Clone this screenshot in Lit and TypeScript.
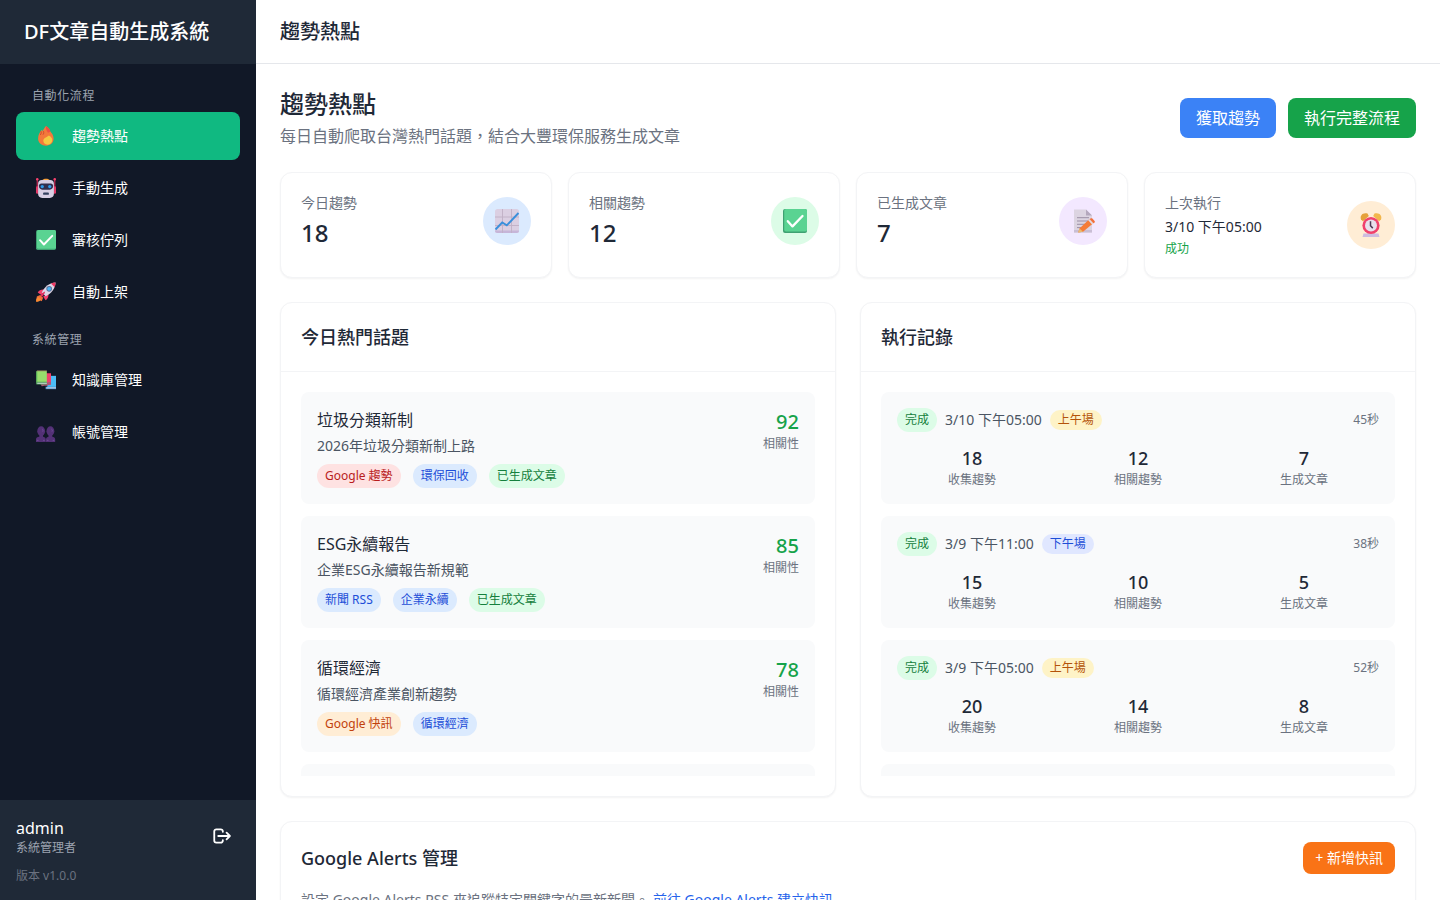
import { LitElement, html, css, svg } from "lit";
import { customElement, property } from "lit/decorators.js";

const glyphs: Record<string, unknown> = {
  fire: svg`
    <path d="M12 1c2.600 1.700 3.900 4 4.300 6.200 1.700 2 3.300 4.600 3.300 7.900 0 4.800-3.200 7.900-7.600 7.900s-7.900-3-7.900-7.700C4.100 11 5.600 7.800 8 5.200l.8 1.700C9.600 4.800 10.500 2.500 12 1z" transform="translate(-2.400 -1.200) scale(1.200 1.080)" fill="#f3793b"/>
    <path d="M12 0c3 1.800 4.700 4.200 5.200 6.600L14.500 8C12.800 5.800 11.500 3.200 12 0z" fill="#ee4f45"/>
    <path d="M5.800 6.200c.9 1.500.5 3-.7 4.600M9 6.200c.7 1.700.2 3-.7 4.300" stroke="#c8452c" fill="none"/>
    <path d="M15.500 11.500c2.800 1.600 4 3.500 4 5.400 0 3.200-2.300 5.600-5.500 5.600-3.300 0-5.200-2-5.200-4.700 0-3 2.900-3.600 6.700-6.300z" fill="#f5c842"/>`,
  robot: svg`
    <path d="M1.500 1v16M22.500 1v16" stroke="#b3264e" stroke-width="1.600"/>
    <circle cx="1.500" cy="1.500" r="1.500" fill="#f4416c"/><circle cx="22.500" cy="1.500" r="1.500" fill="#f4416c"/>
    <rect x="0" y="10" width="3" height="9" rx="1.500" fill="#e33a68"/><rect x="21" y="10" width="3" height="9" rx="1.500" fill="#e33a68"/>
    <path d="M7.500 3C8 .2 16 .2 16.500 3z" fill="#f8a13c"/>
    <path d="M7 2.500h10c3 0 4.500 2 4.500 4.500v12c0 3-1.800 5-5 5h-9c-3.200 0-5-2-5-5V7c0-2.500 1.500-4.500 4.500-4.500z" fill="#d8cfe4"/>
    <path d="M6.500 6.500h11c2 0 3 1.200 3 3.200 0 2.600-1.500 4.300-4 4.300h-9c-2.500 0-4-1.700-4-4.300 0-2 1-3.200 3-3.200z" fill="#312f4e"/>
    <circle cx="7.500" cy="10.300" r="2" fill="#2f9bea"/><circle cx="16.500" cy="10.300" r="2" fill="#2f9bea"/>
    <rect x="8.500" y="17.500" width="7" height="2.600" rx="1" fill="#34415f"/>`,
  check: svg`
    <rect x="0" y="0" width="24" height="24" rx="2" fill="#3fa172"/>
    <rect x="1.200" y="0" width="22.800" height="22.500" rx="1.800" fill="#5ad392"/>
    <path d="M4.800 12.200l4.700 5.200L19.500 7" fill="none" stroke="#fff" stroke-width="2.300" stroke-linecap="round" stroke-linejoin="round"/>`,
  rocket: svg`
    <path d="M1 17.500l4-2 3.500 3.500-1.600 4L4.500 22 1 23.500.3 22z" fill="#f0703a"/>
    <path d="M0 23.800c0-3 1-5 3-5.800l2.800 3C5 23 3 23.800 0 23.800z" fill="#f98a31"/>
    <path d="M2 12.500C3.500 10 6 8.800 9.500 9l-3 6.500zM11.500 22c2.500-1.500 3.700-4 3.500-7.500l-6.500 3z" fill="#f0416c"/>
    <path d="M23.500.6c-7 .4-13.300 4.800-16.500 11.900l4.600 4.600C18.800 13.800 23 7.600 23.500.6z" fill="#ded6e6"/>
    <path d="M23.500.6c-2 .1-3.800.5-5.600 1.100l4.600 4.500c.6-1.800.9-3.700 1-5.600z" fill="#ef3963"/>
    <circle cx="15.800" cy="8.200" r="3.400" fill="#5a6f97"/><circle cx="15.800" cy="8.200" r="2.300" fill="#4cb4f4"/>
    <path d="M5.500 16c1.600-2.500 3.500-4 5.500-4.500-.5 2.500-1.800 4.500-4 6.500z" fill="#e3335f"/>`,
  books: svg`
    <path d="M13.500 7H24v15H13.500z" fill="#4bbcf6"/><path d="M11.500 20H24v3H11.500z" fill="#4a91cf"/><path d="M12.500 20.800H24v1.300H12.500z" fill="#cfd8e8"/>
    <path d="M8.500 4H18v13.500l-6.500 1.500z" fill="#f0416c"/><path d="M5 16.500l13-2.500v3.500L7 19.500z" fill="#a95a78"/>
    <path d="M0 2.500L1.500 1H13v14H0z" fill="#98de6c"/><path d="M0 2.500L1.500 1v13L0 15.500z" fill="#58ab58"/>
    <path d="M0 16c0-1.200.8-2 2-2h11v3.500H1.500C.6 17.500 0 17 0 16z" fill="#4e9b58"/><path d="M1.500 15.300H13v1.200H1.500z" fill="#d5d9e0"/><path d="M1 1h12" stroke="#9a7058" stroke-width=".8"/>`,
  users: svg`
    <g fill="#533176"><ellipse cx="6.200" cy="11" rx="4.700" ry="5.800"/><ellipse cx="17.300" cy="11" rx="4.700" ry="5.800"/>
    <path d="M4 15h4.500v4H4zM15 15h4.500v4H15z"/>
    <path d="M0 24v-3.200C0 18.800 2.200 17.500 6 17.500s5.700 1.300 5.700 3.300V24zM12 24v-3.200c0-2 1.900-3.300 5.500-3.300s5.500 1.300 5.500 3.300V24z"/></g>
    <path d="M7.500 8.500c1 .5 1.200 2 .6 3M18.600 8.500c1 .5 1.200 2 .6 3M1 22h2M8.500 22h2M13 22h2M20 22h2" stroke="#7650a0" fill="none"/>`,
  chart: svg`
    <rect x="0" y="0" width="24" height="24" rx="2.500" fill="#dbcfe2"/>
    <path d="M0 21.500h24c0 1.700-.8 2.500-2.500 2.500h-19C.8 24 0 23.200 0 21.500z" fill="#c6b5d8"/>
    <path d="M7.500 0v24M16.500 0v24M0 8h24M0 16.500h24" stroke="#bfb0c5" stroke-width=".9"/>
    <path d="M.5 20.500l6.700-7 4.600 2.800L23.500 4" fill="none" stroke="#3a8fdb" stroke-width="1.900"/>`,
  memo: svg`
    <path d="M3 .5h12l6 6v17H3z" fill="#dcd4e1"/><path d="M15 .5l6 6h-6z" fill="#b4a8bd"/>
    <path d="M3 21h18v2.500H3z" fill="#c9bed5"/>
    <path d="M6 8.700h12M6 12h12M6 15.300h9M6 18.600h5" stroke="#9c8fa6"/>
    <path d="M8.500 19.500L18.500 10l3.800 4.300-10.300 8.500-4.800.8z" fill="#f57c37"/>
    <path d="M17.200 11.200l3.900 4.200 1.400-1.200-3.900-4.300z" fill="#e2dce6"/>
    <path d="M18.600 9.900c1-.9 2-.9 2.800-.4l2.200 2.400c.6.900.2 1.700-1.100 2.400z" fill="#f2703a"/>
    <path d="M8.500 19.500l3.500 3.300-4.800.8z" fill="#e7bc72"/>`,
  clock: svg`
    <path d="M4.500 20.500h15l1 3.500h-17z" fill="#cdbce0"/>
    <path d="M2 6.500C.5 2.500 4-1 8.500.6L9.800 3 4 8.200z" fill="#e5a13a"/><path d="M22 6.500c1.500-4-2-7.500-6.500-5.900L14.200 3 20 8.200z" fill="#f2b64b"/>
    <circle cx="12" cy="12.500" r="8.600" fill="#f0416c"/><circle cx="12" cy="12.500" r="6" fill="#e8e0ec"/>
    <path d="M11.500 8.200v4.600l2.300 2.300" stroke="#4d3a55" stroke-width="1.500" fill="none"/>`,
  logout: svg`
    <path d="M13 7V6.500A2.500 2.500 0 0 0 10.500 4H5.200a2.500 2.500 0 0 0-2.500 2.500v11A2.500 2.500 0 0 0 5.200 20h5.300a2.500 2.500 0 0 0 2.500-2.500V17M7.500 12h14M17.500 8l4 4-4 4" fill="none" stroke="#fff" stroke-width="2.200" stroke-linecap="round" stroke-linejoin="round"/>`,
};

const base = css`
  *, *::before, *::after { box-sizing: border-box; }
  h1, h2, h3, h4, p, ul { margin: 0; padding: 0; }
  ul { list-style: none; }
  button { font: inherit; border: 0; margin: 0; cursor: pointer; color: #fff; white-space: nowrap; }
  a { text-decoration: none; }
`;

@customElement("app-glyph")
class AppGlyph extends LitElement {
  @property() name = "check";
  static styles = css`
    :host { display: block; flex: none; }
    .art { display: block; width: 100%; height: 100%; overflow: visible; }
  `;
  render() {
    return html`<svg class="art" viewBox="0 0 24 24" aria-hidden="true">${glyphs[this.name]}</svg>`;
  }
}

@customElement("side-bar")
class SideBar extends LitElement {
  static styles = [base, css`
    :host { display: flex; flex-direction: column; flex: none; width: 256px; background: #111827; color: #fff; }
    .brand { display: flex; align-items: center; height: 64px; padding: 0 24px; background: #1f2937; }
    .brand-name { font-size: 20px; line-height: 28px; font-weight: 500; white-space: nowrap; }
    .nav { flex: 1; padding: 16px; display: flex; flex-direction: column; gap: 8px; }
    .label { padding: 8px 16px; font-size: 12px; line-height: 16px; letter-spacing: 0.05em; color: #9ca3af; }
    .items { display: flex; flex-direction: column; gap: 4px; }
    .item { display: flex; align-items: center; gap: 16px; height: 48px; padding: 0 20px; border-radius: 8px; font-size: 14px; line-height: 20px; color: #fff; }
    .active { background: #10b981; }
    .icon { width: 20px; height: 20px; }
    .user { padding: 16px; background: #1f2937; }
    .row { display: flex; align-items: center; justify-content: space-between; }
    .name { font-size: 16px; line-height: 24px; }
    .role { font-size: 12px; line-height: 16px; color: #9ca3af; }
    .version { margin-top: 12px; font-size: 12px; line-height: 16px; color: #6b7280; }
    .logout { padding: 8px; background: transparent; border-radius: 8px; }
    .exit { width: 20px; height: 20px; }
  `];
  groups = [
    { label: "自動化流程", items: [["fire", "趨勢熱點"], ["robot", "手動生成"], ["check", "審核佇列"], ["rocket", "自動上架"]] },
    { label: "系統管理", items: [["books", "知識庫管理"], ["users", "帳號管理"]] },
  ];
  render() {
    return html`
      <div class="brand"><h1 class="brand-name">DF文章自動生成系統</h1></div>
      <nav class="nav">
        ${this.groups.map((g, gi) => html`<div>
          <p class="label">${g.label}</p>
          <ul class="items">${g.items.map(([icon, text], i) => html`
            <li><a href="#" class="item ${gi + i === 0 ? "active" : ""}"><app-glyph class="icon" name=${icon}></app-glyph>${text}</a></li>`)}
          </ul>
        </div>`)}
      </nav>
      <div class="user">
        <div class="row">
          <div><p class="name">admin</p><p class="role">系統管理者</p></div>
          <button class="logout"><app-glyph class="exit" name="logout"></app-glyph></button>
        </div>
        <p class="version">版本 v1.0.0</p>
      </div>`;
  }
}

const topics = [
  { title: "垃圾分類新制", text: "2026年垃圾分類新制上路", score: 92, tags: [["red", "Google 趨勢"], ["blue", "環保回收"], ["green", "已生成文章"]] },
  { title: "ESG永續報告", text: "企業ESG永續報告新規範", score: 85, tags: [["blue", "新聞 RSS"], ["blue", "企業永續"], ["green", "已生成文章"]] },
  { title: "循環經濟", text: "循環經濟產業創新趨勢", score: 78, tags: [["orange", "Google 快訊"], ["blue", "循環經濟"]] },
];

const runs = [
  { date: "3/10 下午05:00", slot: "上午場", tone: "yellow", time: "45秒", counts: [18, 12, 7] },
  { date: "3/9 下午11:00", slot: "下午場", tone: "indigo", time: "38秒", counts: [15, 10, 5] },
  { date: "3/9 下午05:00", slot: "上午場", tone: "yellow", time: "52秒", counts: [20, 14, 8] },
];
const countLabels = ["收集趨勢", "相關趨勢", "生成文章"];

@customElement("trend-page")
class TrendPage extends LitElement {
  static styles = [base, css`
    :host { display: flex; flex-direction: column; gap: 24px; padding: 24px; color: #1f2937; }
    .head, .alert-head { display: flex; align-items: center; justify-content: space-between; }
    .title { font-size: 24px; line-height: 32px; font-weight: 500; }
    .sub { margin-top: 4px; font-size: 16px; line-height: 24px; color: #6b7280; }
    .actions { display: flex; gap: 12px; }
    .btn { padding: 8px 16px; border-radius: 8px; font-size: 16px; line-height: 24px; }
    .btn-blue { background: #3b82f6; }
    .btn-green { background: #16a34a; }
    .btn-orange { padding: 6px 12px; font-size: 14px; line-height: 20px; background: #f97316; }
    .card { background: #fff; border: 1px solid #f3f4f6; border-radius: 12px; box-shadow: 0 1px 2px rgba(0, 0, 0, 0.05); }
    .stats { display: grid; grid-template-columns: repeat(4, 1fr); gap: 16px; }
    .stat { padding: 20px; }
    .stat-row { display: flex; align-items: center; justify-content: space-between; }
    .small { font-size: 14px; line-height: 20px; }
    .muted { color: #6b7280; }
    .value { margin-top: 4px; font-size: 24px; line-height: 32px; font-weight: 500; }
    .when { margin-top: 4px; }
    .ok { margin-top: 4px; font-size: 12px; line-height: 16px; color: #16a34a; }
    .disc { display: grid; place-items: center; width: 48px; height: 48px; border-radius: 50%; }
    .disc-icon { width: 24px; height: 24px; }
    .panels { display: grid; grid-template-columns: 1fr 1fr; gap: 24px; }
    .panel-head { padding: 20px; border-bottom: 1px solid #f3f4f6; }
    .panel-title { font-size: 18px; line-height: 28px; font-weight: 500; }
    .panel-body { padding: 20px; }
    .list { display: flex; flex-direction: column; gap: 12px; max-height: 384px; overflow-y: auto; scrollbar-width: none; }
    .entry { flex: none; min-height: 112px; padding: 16px; background: #f9fafb; border-radius: 8px; }
    .topic { display: flex; justify-content: space-between; }
    .topic-title { font-size: 16px; line-height: 24px; font-weight: 400; }
    .topic-text { margin-top: 4px; color: #4b5563; }
    .tags { display: flex; gap: 12px; margin-top: 8px; }
    .tag { padding: 4px 8px; border-radius: 12px; font-size: 12px; line-height: 16px; }
    .slot { padding: 2px 8px; }
    .score { text-align: right; }
    .score-value { font-size: 20px; line-height: 28px; font-weight: 500; color: #16a34a; }
    .tiny { font-size: 12px; line-height: 16px; color: #6b7280; }
    .run-head { display: flex; align-items: center; gap: 8px; }
    .run-date { color: #4b5563; }
    .run-time { margin-left: auto; }
    .counts { display: grid; grid-template-columns: repeat(3, 1fr); gap: 16px; margin-top: 12px; text-align: center; }
    .count { font-size: 18px; line-height: 28px; font-weight: 500; }
    .alerts { padding: 20px; }
    .hint { margin-top: 16px; }
    .link { color: #2563eb; margin-left: 4px; }
    .red { background: #fee2e2; color: #b91c1c; }
    .blue { background: #dbeafe; color: #1d4ed8; }
    .green { background: #dcfce7; color: #15803d; }
    .orange { background: #ffedd5; color: #c2410c; }
    .yellow { background: #fef3c7; color: #b45309; }
    .indigo { background: #e0e7ff; color: #1d4ed8; }
    .purple { background: #f3e8ff; }
  `];
  stats = [["今日趨勢", 18, "blue", "chart"], ["相關趨勢", 12, "green", "check"], ["已生成文章", 7, "purple", "memo"]];
  disc(tone: unknown, icon: unknown) {
    return html`<div class="disc ${tone}"><app-glyph class="disc-icon" name=${icon}></app-glyph></div>`;
  }
  render() {
    return html`
      <div class="head">
        <div>
          <h2 class="title">趨勢熱點</h2>
          <p class="sub">每日自動爬取台灣熱門話題，結合大豐環保服務生成文章</p>
        </div>
        <div class="actions">
          <button class="btn btn-blue">獲取趨勢</button>
          <button class="btn btn-green">執行完整流程</button>
        </div>
      </div>
      <div class="stats">
        ${this.stats.map(([label, value, tone, icon]) => html`<div class="card stat"><div class="stat-row">
          <div><p class="small muted">${label}</p><p class="value">${value}</p></div>
          ${this.disc(tone, icon)}
        </div></div>`)}
        <div class="card stat"><div class="stat-row">
          <div><p class="small muted">上次執行</p><p class="small when">3/10 下午05:00</p><p class="ok">成功</p></div>
          ${this.disc("orange", "clock")}
        </div></div>
      </div>
      <div class="panels">
        <section class="card">
          <div class="panel-head"><h3 class="panel-title">今日熱門話題</h3></div>
          <div class="panel-body"><ul class="list">
            ${topics.map((t) => html`<li class="entry topic">
              <div>
                <h4 class="topic-title">${t.title}</h4>
                <p class="small topic-text">${t.text}</p>
                <div class="tags">${t.tags.map(([tone, text]) => html`<span class="tag ${tone}">${text}</span>`)}</div>
              </div>
              <div class="score"><p class="score-value">${t.score}</p><p class="tiny">相關性</p></div>
            </li>`)}
            <li class="entry"></li>
          </ul></div>
        </section>
        <section class="card">
          <div class="panel-head"><h3 class="panel-title">執行記錄</h3></div>
          <div class="panel-body"><ul class="list">
            ${runs.map((r) => html`<li class="entry">
              <div class="run-head">
                <span class="tag green">完成</span>
                <span class="small run-date">${r.date}</span>
                <span class="tag slot ${r.tone}">${r.slot}</span>
                <span class="tiny run-time">${r.time}</span>
              </div>
              <div class="counts">${r.counts.map((n, i) => html`<div><p class="count">${n}</p><p class="tiny">${countLabels[i]}</p></div>`)}</div>
            </li>`)}
            <li class="entry"></li>
          </ul></div>
        </section>
      </div>
      <section class="card alerts">
        <div class="alert-head">
          <h3 class="panel-title">Google Alerts 管理</h3>
          <button class="btn btn-orange">+ 新增快訊</button>
        </div>
        <p class="small muted hint">設定 Google Alerts RSS 來追蹤特定關鍵字的最新新聞。<a class="link" href="#">前往 Google Alerts 建立快訊</a></p>
      </section>`;
  }
}

@customElement("app-root")
class AppRoot extends LitElement {
  static styles = [base, css`
    :host { display: flex; height: 100vh; overflow: hidden; background: #fff; font-family: "Noto Sans", "Noto Sans CJK TC", sans-serif; }
    .content { flex: 1; min-width: 0; display: flex; flex-direction: column; }
    .top { flex: none; display: flex; align-items: center; height: 64px; padding: 0 24px; border-bottom: 1px solid #e5e7eb; }
    .top-title { font-size: 20px; line-height: 28px; font-weight: 500; color: #1f2937; }
    .scroll { flex: 1; min-height: 0; overflow-y: auto; scrollbar-width: none; }
  `];
  render() {
    return html`
      <side-bar></side-bar>
      <div class="content">
        <header class="top"><h2 class="top-title">趨勢熱點</h2></header>
        <main class="scroll"><trend-page></trend-page></main>
      </div>`;
  }
}
